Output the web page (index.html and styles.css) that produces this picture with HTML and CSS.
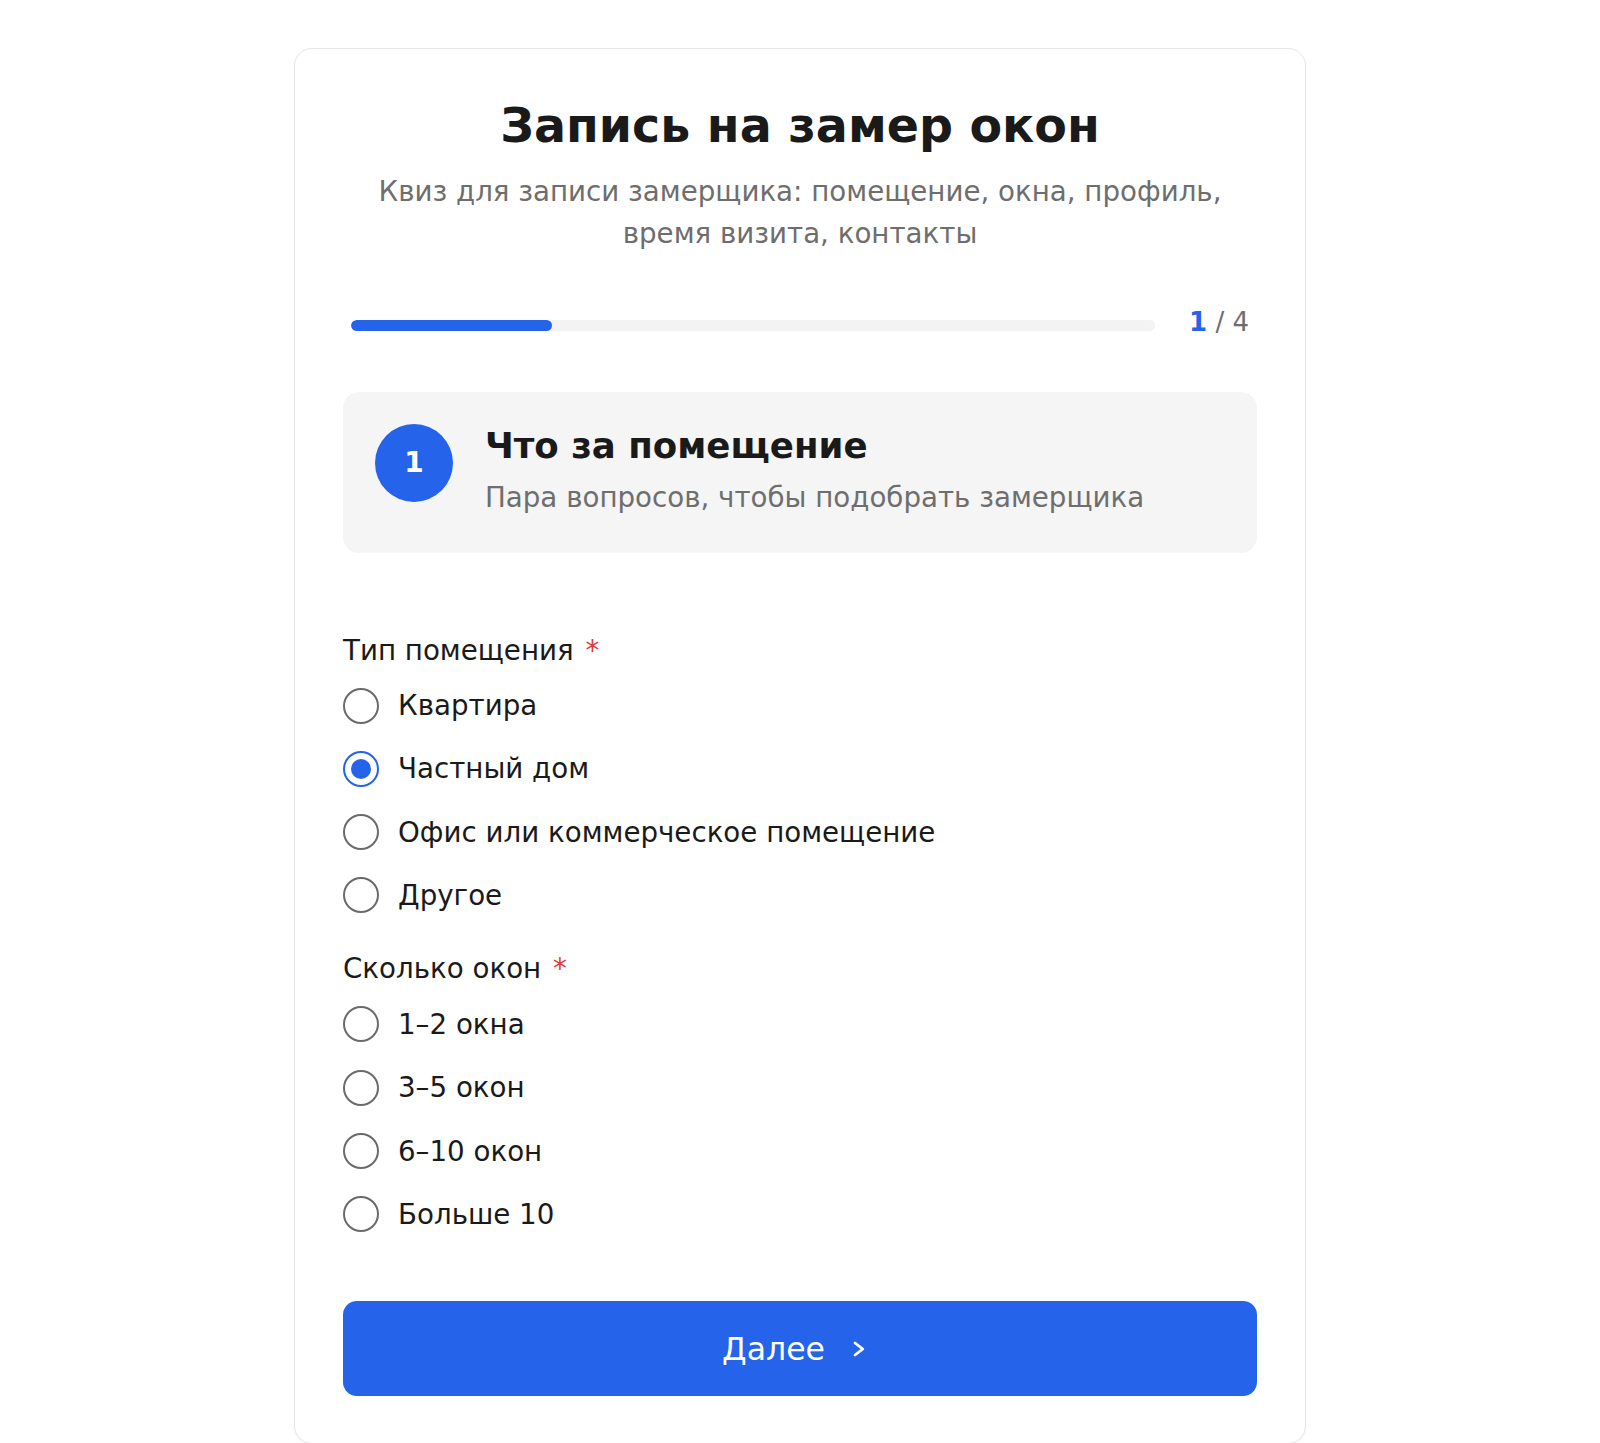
FILE: index.html
```html
<!DOCTYPE html>
<html lang="ru">
<head>
<meta charset="utf-8">
<title>Запись на замер окон</title>
<link rel="stylesheet" href="styles.css">
</head>
<body>
<main class="card">
  <h1 class="title">Запись на замер окон</h1>
  <p class="subtitle">Квиз для записи замерщика: помещение, окна, профиль, время визита, контакты</p>

  <div class="progress">
    <div class="track"><div class="fill" style="width:25%"></div></div>
    <div class="counter"><span class="cur">1</span> / 4</div>
  </div>

  <section class="step">
    <div class="step-num">1</div>
    <div class="step-text">
      <h2 class="step-title">Что за помещение</h2>
      <p class="step-desc">Пара вопросов, чтобы подобрать замерщика</p>
    </div>
  </section>

  <div class="group group-first">
    <div class="label">Тип помещения <span class="req">*</span></div>
    <div class="options">
      <label class="option"><span class="radio"></span><span class="opt-text">Квартира</span></label>
      <label class="option"><span class="radio checked"></span><span class="opt-text">Частный дом</span></label>
      <label class="option"><span class="radio"></span><span class="opt-text">Офис или коммерческое помещение</span></label>
      <label class="option"><span class="radio"></span><span class="opt-text">Другое</span></label>
    </div>
  </div>

  <div class="group">
    <div class="label">Сколько окон <span class="req">*</span></div>
    <div class="options">
      <label class="option"><span class="radio"></span><span class="opt-text">1–2 окна</span></label>
      <label class="option"><span class="radio"></span><span class="opt-text">3–5 окон</span></label>
      <label class="option"><span class="radio"></span><span class="opt-text">6–10 окон</span></label>
      <label class="option"><span class="radio"></span><span class="opt-text">Больше 10</span></label>
    </div>
  </div>

  <button class="next" type="button">
    <span>Далее</span>
    <svg class="chev" width="14" height="16" viewBox="0 0 14 16" aria-hidden="true"><path d="M3 2 L10.8 8 L3 14" fill="none" stroke="#fff" stroke-width="2.8" stroke-linecap="round" stroke-linejoin="round"/></svg>
  </button>
</main>
</body>
</html>
```

FILE: styles.css
```css
* { box-sizing: border-box; }

body {
  margin: 0;
  padding-top: 48px;
  background: #ffffff;
  font-family: "DejaVu Sans", "Noto Sans", sans-serif;
  color: #1a1a1a;
}

.card {
  width: 1012px;
  margin: 0 auto;
  padding: 48px 48px 47px;
  border: 1px solid #e6e6e6;
  border-radius: 18px;
  background: #fff;
  box-shadow: 0 1px 3px rgba(0,0,0,0.04);
}

.title {
  margin: 0;
  text-align: center;
  font-size: 47.5px;
  line-height: 57.6px;
  font-weight: 700;
  color: #1a1a1a;
}

.subtitle {
  margin: 16px 0 0;
  text-align: center;
  font-size: 27.7px;
  line-height: 42px;
  color: #6e6e6e;
}

.progress {
  display: flex;
  align-items: center;
  gap: 34px;
  margin-top: 57px;
  padding: 0 8px;
}

.track {
  flex: 1;
  height: 11px;
  border-radius: 6px;
  background: #f3f3f3;
  overflow: hidden;
}

.fill {
  height: 100%;
  border-radius: 6px;
  background: #2563eb;
}

.counter {
  font-size: 26px;
  line-height: 34px;
  color: #6e6e6e;
  margin-top: -7px;
}

.cur {
  color: #2563eb;
  font-weight: 700;
}

.step {
  display: flex;
  align-items: flex-start;
  gap: 32px;
  margin-top: 53px;
  padding: 32px 32px 34px;
  background: #f5f5f5;
  border-radius: 16px;
}

.step-num {
  flex: none;
  width: 78px;
  height: 78px;
  border-radius: 50%;
  background: #2563eb;
  color: #fff;
  display: flex;
  align-items: center;
  justify-content: center;
  font-size: 28px;
  font-weight: 700;
}

.step-title {
  margin: 0;
  font-size: 35.6px;
  line-height: 44px;
  font-weight: 700;
  color: #1a1a1a;
}

.step-desc {
  margin: 9px 0 0;
  font-size: 27.7px;
  line-height: 42px;
  color: #6e6e6e;
}

.group { margin-top: 32px; }
.group-first { margin-top: 77px; }

.label {
  font-size: 27.7px;
  line-height: 42px;
  color: #1a1a1a;
}

.req {
  color: #e53935;
  margin-left: 3px;
}

.options {
  display: flex;
  flex-direction: column;
  gap: 21.3px;
  margin-top: 13px;
}

.option {
  display: flex;
  align-items: center;
  gap: 19px;
  height: 42px;
  font-size: 27.7px;
  color: #1a1a1a;
}

.radio {
  flex: none;
  width: 36px;
  height: 36px;
  border: 2px solid #6a6a6a;
  border-radius: 50%;
  display: flex;
  align-items: center;
  justify-content: center;
}

.radio.checked {
  border-color: #2563eb;
}

.radio.checked::after {
  content: "";
  width: 20px;
  height: 20px;
  border-radius: 50%;
  background: #2563eb;
}

.next {
  display: flex;
  align-items: center;
  justify-content: center;
  gap: 27px;
  width: 100%;
  height: 95px;
  margin-top: 66px;
  border: none;
  border-radius: 14px;
  background: #2563eb;
  color: #fff;
  font-family: "DejaVu Sans", sans-serif;
  font-size: 31.5px;
  padding: 0 12px 0 0;
}

.chev { display: block; }
```
